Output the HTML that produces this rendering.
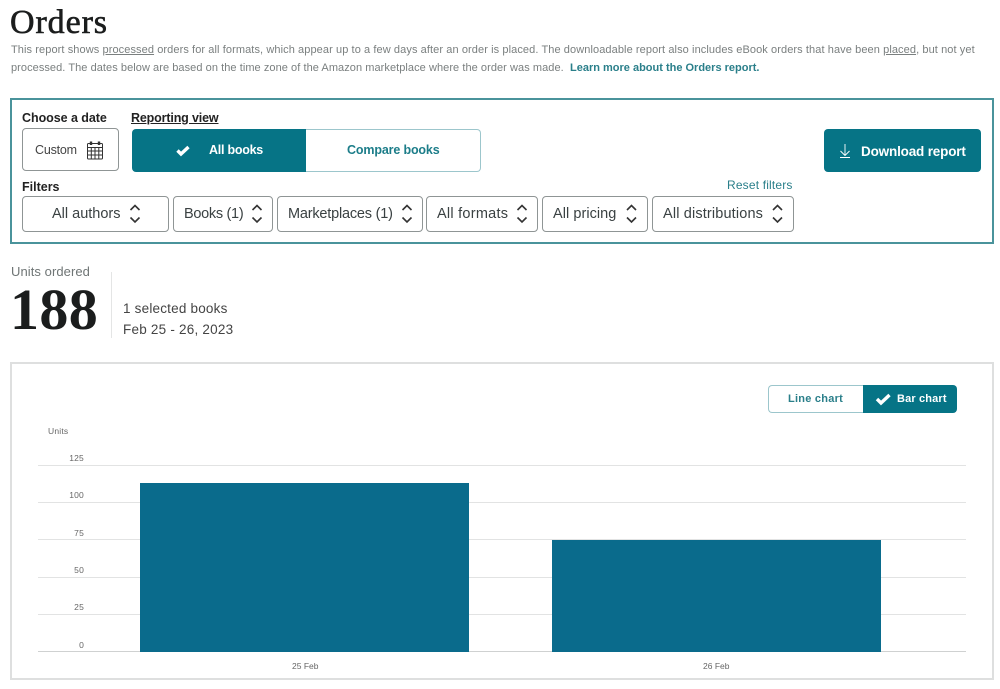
<!DOCTYPE html>
<html><head><meta charset="utf-8"><style>
html,body{margin:0;padding:0;background:#fff;width:1000px;height:689px;overflow:hidden}
body{position:relative;font-family:"Liberation Sans",sans-serif;color:#333;filter:blur(.3px)}
.a{position:absolute;white-space:nowrap}
.box{position:absolute;box-sizing:border-box;background:#fff;border:1px solid #8f9595;border-radius:4px}
.f{font-size:14.5px;color:#3a4142;line-height:16px;top:206px}
.g{position:absolute;left:38px;width:928px;height:1px;background:#e2e3e3}
.y{position:absolute;font-size:8.5px;color:#666;width:46px;text-align:right;left:38px;letter-spacing:.2px;line-height:10px}
svg{position:absolute;overflow:visible}
</style></head><body>
<div class="a" style="left:10px;top:3px;font:34px/40px 'Liberation Serif',serif;color:#1b1d1d;-webkit-text-stroke:.6px #1b1d1d;letter-spacing:.9px">Orders</div>
<div class="a" style="left:11px;top:43px;font-size:11px;line-height:14px;color:#7a7f7f;letter-spacing:.09px">This report shows <u>processed</u> orders for all formats, which appear up to a few days after an order is placed. The downloadable report also includes eBook orders that have been <u>placed</u>, but not yet</div>
<div class="a" style="left:11px;top:60.5px;font-size:11px;line-height:14px;color:#7a7f7f;letter-spacing:.06px">processed. The dates below are based on the time zone of the Amazon marketplace where the order was made.&nbsp; <b style="color:#2a7f8a;letter-spacing:0">Learn more about the Orders report.</b></div>

<div style="position:absolute;left:10px;top:98px;width:984px;height:146px;box-sizing:border-box;border:2px solid #4a939b"></div>
<div class="a" style="left:22px;top:111px;font:bold 12.5px/14px 'Liberation Sans',sans-serif;color:#222;letter-spacing:-.05px">Choose a date</div>
<div class="a" style="left:131px;top:111px;font:bold 12.5px/14px 'Liberation Sans',sans-serif;color:#222;text-decoration:underline;letter-spacing:-.15px">Reporting view</div>
<div class="box" style="left:22px;top:128px;width:97px;height:43px"></div>
<div class="a" style="left:35px;top:142px;font-size:12.5px;line-height:16px;color:#444;letter-spacing:-.2px">Custom</div>
<svg style="left:86px;top:140px" width="18" height="20" viewBox="0 0 18 20" fill="none" stroke="#333" stroke-width="1"><rect x="1.500" y="3.500" width="15" height="15.500" rx="1"/><path d="M1.500 7.500H16.500M1.500 11H16.500M1.500 15H16.500M5.300 7.500V19M9 7.500V19M12.800 7.500V19"/><path d="M5 1.500V5M13 1.500V5" stroke-width="2.400"/></svg>
<div style="position:absolute;left:132px;top:129px;width:175px;height:43px;background:#067486;border-radius:4px 0 0 4px"></div>
<div style="position:absolute;left:306px;top:129px;width:175px;height:43px;box-sizing:border-box;border:1px solid #9cc6cc;border-left:0;border-radius:0 4px 4px 0;background:#fff"></div>
<svg style="left:175px;top:144px" width="16" height="13" viewBox="0 0 16 13"><path d="M2.500 6.500L6 10L13.500 3" fill="none" stroke="#fff" stroke-width="3.400"/></svg>
<div class="a" style="left:209px;top:143px;font:bold 12.500px/15px 'Liberation Sans',sans-serif;color:#fff;letter-spacing:-.25px">All books</div>
<div class="a" style="left:347px;top:143px;font:bold 12.500px/15px 'Liberation Sans',sans-serif;color:#1c7d89;letter-spacing:-.15px">Compare books</div>
<div style="position:absolute;left:824px;top:129px;width:157px;height:43px;background:#067486;border-radius:4px"></div>
<svg style="left:838px;top:143px" width="14" height="15" viewBox="0 0 14 15" fill="none" stroke="#fff" stroke-width=".9"><path d="M7 1V12.500M2.500 8L7 12.500L11.500 8M2 14.500H12"/></svg>
<div class="a" style="left:861px;top:144px;font:bold 13.500px/16px 'Liberation Sans',sans-serif;color:#fff;letter-spacing:-.17px">Download report</div>

<div class="a" style="left:22px;top:180px;font:bold 12.500px/14px 'Liberation Sans',sans-serif;color:#222">Filters</div>
<div class="a" style="left:727px;top:178px;font-size:12px;line-height:15px;color:#2a7f8a;letter-spacing:.17px">Reset filters</div>

<div class="box" style="left:22px;top:196px;width:147px;height:36px"></div>
<div class="a f" style="left:52px;letter-spacing:0">All authors</div>
<div class="box" style="left:173px;top:196px;width:100px;height:36px"></div>
<div class="a f" style="left:184px;letter-spacing:-.3px">Books (1)</div>
<div class="box" style="left:277px;top:196px;width:146px;height:36px"></div>
<div class="a f" style="left:288px;letter-spacing:-.2px">Marketplaces (1)</div>
<div class="box" style="left:426px;top:196px;width:112px;height:36px"></div>
<div class="a f" style="left:437px;letter-spacing:.25px">All formats</div>
<div class="box" style="left:542px;top:196px;width:106px;height:36px"></div>
<div class="a f" style="left:553px;letter-spacing:.05px">All pricing</div>
<div class="box" style="left:652px;top:196px;width:142px;height:36px"></div>
<div class="a f" style="left:663px;letter-spacing:.15px">All distributions</div>
<svg style="left:0;top:0" width="1000" height="689" fill="none" stroke="#333" stroke-width="1.600">
<path d="M130.500 210L135 205.500L139.500 210M130.500 217.500L135 222L139.500 217.500"/>
<path d="M252.500 210L257 205.500L261.500 210M252.500 217.500L257 222L261.500 217.500"/>
<path d="M402.500 210L407 205.500L411.500 210M402.500 217.500L407 222L411.500 217.500"/>
<path d="M517.500 210L522 205.500L526.500 210M517.500 217.500L522 222L526.500 217.500"/>
<path d="M627 210L631.500 205.500L636 210M627 217.500L631.500 222L636 217.500"/>
<path d="M773 210L777.500 205.500L782 210M773 217.500L777.500 222L782 217.500"/>
</svg>

<div class="a" style="left:11px;top:264px;font-size:13px;line-height:16px;color:#6f7575;letter-spacing:.07px">Units ordered</div>
<div class="a" style="left:10px;top:277px;font:bold 58px/66px 'Liberation Serif',serif;color:#1b1d1d;letter-spacing:.4px">188</div>
<div style="position:absolute;left:111px;top:272px;width:1px;height:66px;background:#e4e5e5"></div>
<div class="a" style="left:123px;top:301px;font-size:13.500px;line-height:16px;color:#444;letter-spacing:.2px">1 selected books</div>
<div class="a" style="left:123px;top:322px;font-size:13.500px;line-height:16px;color:#444;letter-spacing:.22px">Feb 25 - 26, 2023</div>

<div style="position:absolute;left:10px;top:362px;width:984px;height:318px;box-sizing:border-box;border:2px solid #dedfdf"></div>
<div style="position:absolute;left:768px;top:385px;width:96px;height:28px;box-sizing:border-box;border:1px solid #9cc6cc;border-right:0;border-radius:4px 0 0 4px"></div>
<div style="position:absolute;left:863px;top:385px;width:94px;height:28px;background:#067486;border-radius:0 4px 4px 0"></div>
<div class="a" style="left:788px;top:391.500px;font:bold 11px/14px 'Liberation Sans',sans-serif;color:#2a7f8a;letter-spacing:.25px">Line chart</div>
<svg style="left:875px;top:392px" width="17" height="14" viewBox="0 0 17 14"><path d="M2 7L6 11L14.500 3" fill="none" stroke="#fff" stroke-width="3.400"/></svg>
<div class="a" style="left:897px;top:391.500px;font:bold 11px/14px 'Liberation Sans',sans-serif;color:#fff;letter-spacing:.15px">Bar chart</div>

<div class="a" style="left:48px;top:426px;font-size:8.500px;line-height:10px;color:#666;letter-spacing:.2px">Units</div>
<div class="y" style="top:453px">125</div><div class="g" style="top:465px"></div>
<div class="y" style="top:490px">100</div><div class="g" style="top:502px"></div>
<div class="y" style="top:528px">75</div><div class="g" style="top:539px"></div>
<div class="y" style="top:565px">50</div><div class="g" style="top:577px"></div>
<div class="y" style="top:602px">25</div><div class="g" style="top:614px"></div>
<div class="y" style="top:640px">0</div><div class="g" style="top:651px;background:#cfd1d1"></div>
<div style="position:absolute;left:140px;top:483px;width:329px;height:169px;background:#0a6b8c"></div>
<div style="position:absolute;left:551.500px;top:540px;width:329px;height:112px;background:#0a6b8c"></div>
<div class="a" style="left:292px;top:661px;font-size:8.500px;line-height:11px;color:#666">25 Feb</div>
<div class="a" style="left:703px;top:661px;font-size:8.500px;line-height:11px;color:#666">26 Feb</div>
</body></html>
